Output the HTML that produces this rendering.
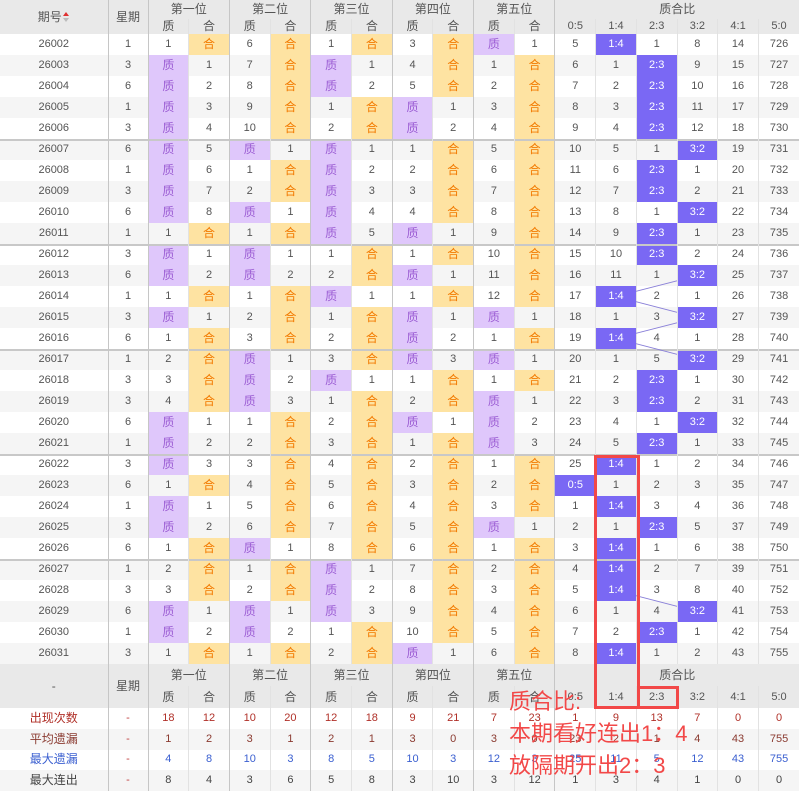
<!DOCTYPE html>
<html><head><meta charset="utf-8">
<style>
*{margin:0;padding:0;box-sizing:border-box}
body{width:799px;height:791px;overflow:hidden;background:#fff;position:relative;font-family:"Liberation Sans","Noto Sans CJK SC",sans-serif}
table{border-collapse:collapse;table-layout:fixed;width:799px;font-size:11px;color:#555;text-align:center}
td{height:21px;padding:0;border-left:1px solid #e2e2e2;white-space:nowrap;overflow:hidden;line-height:13px}
td.b{border-left:1px solid #c6c6c6}
.hd td{background:#e9e9e9;color:#555;font-size:12px}
tr.h1 td{height:19px}
tr.h2 td{height:15px;font-size:12px}
tr.h2 td.n{font-size:11px}
tbody.d tr:nth-child(even) td{background:#f5f5f5}
tbody.d tr.g td{box-shadow:inset 0 2px #c8c8c8}
td.z{background:#dfc7fb !important;color:#9c5ed4;font-size:12px}
td.h{background:#fee3a2 !important;color:#f27a00;font-size:12px}
td.r{background:#7a68f4 !important;color:#fff}
tr.f1 td{height:22px}
tr.f2 td{height:22px}
tbody.s td{height:20.75px}
tbody.s tr:nth-child(even) td{background:#f5f5f5}
.c1 td{color:#b03028}.c2 td{color:#8a3a30}.c3 td{color:#3a5fd0}.c4 td{color:#444}
.c1 td:nth-child(2),.c2 td:nth-child(2),.c3 td:nth-child(2),.c4 td:nth-child(2){color:#c04040}
.arr{display:inline-block;width:7px;height:10px;vertical-align:middle;position:relative;margin-left:1px}
.arr:before{content:"";position:absolute;left:0;top:0;border:3.5px solid transparent;border-bottom:4px solid #e03030;border-top:0}
.arr:after{content:"";position:absolute;left:0;top:6px;border:3.5px solid transparent;border-top:4px solid #bbb;border-bottom:0}
.rb{position:absolute;border:3px solid #f24848}
.note{position:absolute;left:509px;top:686px;color:#f24848;font-size:22px;line-height:32px;font-family:"Liberation Sans","Noto Sans CJK SC",sans-serif;white-space:nowrap}
</style></head><body>
<table>
<colgroup><col style="width:108px"><col style="width:40px"><col span="16" style="width:40.6875px"></colgroup>
<tbody class="hd">
<tr class="h1"><td rowspan="2" style="border-left:0">期号<span class="arr"></span></td><td rowspan="2" class="b">星期</td><td colspan="2" class="b">第一位</td><td colspan="2" class="b">第二位</td><td colspan="2" class="b">第三位</td><td colspan="2" class="b">第四位</td><td colspan="2" class="b">第五位</td><td colspan="6" class="b">质合比</td></tr>
<tr class="h2"><td class="b">质</td><td>合</td><td class="b">质</td><td>合</td><td class="b">质</td><td>合</td><td class="b">质</td><td>合</td><td class="b">质</td><td>合</td><td class="b n">0:5</td><td class="n">1:4</td><td class="n">2:3</td><td class="n">3:2</td><td class="n">4:1</td><td class="n">5:0</td></tr>
</tbody>
<tbody class="d">
<tr><td style="border-left:0">26002</td><td class="b">1</td><td class="b">1</td><td class="h">合</td><td class="b">6</td><td class="h">合</td><td class="b">1</td><td class="h">合</td><td class="b">3</td><td class="h">合</td><td class="b z">质</td><td>1</td><td class="b">5</td><td class="r">1:4</td><td>1</td><td>8</td><td>14</td><td>726</td></tr>
<tr><td style="border-left:0">26003</td><td class="b">3</td><td class="b z">质</td><td>1</td><td class="b">7</td><td class="h">合</td><td class="b z">质</td><td>1</td><td class="b">4</td><td class="h">合</td><td class="b">1</td><td class="h">合</td><td class="b">6</td><td>1</td><td class="r">2:3</td><td>9</td><td>15</td><td>727</td></tr>
<tr><td style="border-left:0">26004</td><td class="b">6</td><td class="b z">质</td><td>2</td><td class="b">8</td><td class="h">合</td><td class="b z">质</td><td>2</td><td class="b">5</td><td class="h">合</td><td class="b">2</td><td class="h">合</td><td class="b">7</td><td>2</td><td class="r">2:3</td><td>10</td><td>16</td><td>728</td></tr>
<tr><td style="border-left:0">26005</td><td class="b">1</td><td class="b z">质</td><td>3</td><td class="b">9</td><td class="h">合</td><td class="b">1</td><td class="h">合</td><td class="b z">质</td><td>1</td><td class="b">3</td><td class="h">合</td><td class="b">8</td><td>3</td><td class="r">2:3</td><td>11</td><td>17</td><td>729</td></tr>
<tr><td style="border-left:0">26006</td><td class="b">3</td><td class="b z">质</td><td>4</td><td class="b">10</td><td class="h">合</td><td class="b">2</td><td class="h">合</td><td class="b z">质</td><td>2</td><td class="b">4</td><td class="h">合</td><td class="b">9</td><td>4</td><td class="r">2:3</td><td>12</td><td>18</td><td>730</td></tr>
<tr class="g"><td style="border-left:0">26007</td><td class="b">6</td><td class="b z">质</td><td>5</td><td class="b z">质</td><td>1</td><td class="b z">质</td><td>1</td><td class="b">1</td><td class="h">合</td><td class="b">5</td><td class="h">合</td><td class="b">10</td><td>5</td><td>1</td><td class="r">3:2</td><td>19</td><td>731</td></tr>
<tr><td style="border-left:0">26008</td><td class="b">1</td><td class="b z">质</td><td>6</td><td class="b">1</td><td class="h">合</td><td class="b z">质</td><td>2</td><td class="b">2</td><td class="h">合</td><td class="b">6</td><td class="h">合</td><td class="b">11</td><td>6</td><td class="r">2:3</td><td>1</td><td>20</td><td>732</td></tr>
<tr><td style="border-left:0">26009</td><td class="b">3</td><td class="b z">质</td><td>7</td><td class="b">2</td><td class="h">合</td><td class="b z">质</td><td>3</td><td class="b">3</td><td class="h">合</td><td class="b">7</td><td class="h">合</td><td class="b">12</td><td>7</td><td class="r">2:3</td><td>2</td><td>21</td><td>733</td></tr>
<tr><td style="border-left:0">26010</td><td class="b">6</td><td class="b z">质</td><td>8</td><td class="b z">质</td><td>1</td><td class="b z">质</td><td>4</td><td class="b">4</td><td class="h">合</td><td class="b">8</td><td class="h">合</td><td class="b">13</td><td>8</td><td>1</td><td class="r">3:2</td><td>22</td><td>734</td></tr>
<tr><td style="border-left:0">26011</td><td class="b">1</td><td class="b">1</td><td class="h">合</td><td class="b">1</td><td class="h">合</td><td class="b z">质</td><td>5</td><td class="b z">质</td><td>1</td><td class="b">9</td><td class="h">合</td><td class="b">14</td><td>9</td><td class="r">2:3</td><td>1</td><td>23</td><td>735</td></tr>
<tr class="g"><td style="border-left:0">26012</td><td class="b">3</td><td class="b z">质</td><td>1</td><td class="b z">质</td><td>1</td><td class="b">1</td><td class="h">合</td><td class="b">1</td><td class="h">合</td><td class="b">10</td><td class="h">合</td><td class="b">15</td><td>10</td><td class="r">2:3</td><td>2</td><td>24</td><td>736</td></tr>
<tr><td style="border-left:0">26013</td><td class="b">6</td><td class="b z">质</td><td>2</td><td class="b z">质</td><td>2</td><td class="b">2</td><td class="h">合</td><td class="b z">质</td><td>1</td><td class="b">11</td><td class="h">合</td><td class="b">16</td><td>11</td><td>1</td><td class="r">3:2</td><td>25</td><td>737</td></tr>
<tr><td style="border-left:0">26014</td><td class="b">1</td><td class="b">1</td><td class="h">合</td><td class="b">1</td><td class="h">合</td><td class="b z">质</td><td>1</td><td class="b">1</td><td class="h">合</td><td class="b">12</td><td class="h">合</td><td class="b">17</td><td class="r">1:4</td><td>2</td><td>1</td><td>26</td><td>738</td></tr>
<tr><td style="border-left:0">26015</td><td class="b">3</td><td class="b z">质</td><td>1</td><td class="b">2</td><td class="h">合</td><td class="b">1</td><td class="h">合</td><td class="b z">质</td><td>1</td><td class="b z">质</td><td>1</td><td class="b">18</td><td>1</td><td>3</td><td class="r">3:2</td><td>27</td><td>739</td></tr>
<tr><td style="border-left:0">26016</td><td class="b">6</td><td class="b">1</td><td class="h">合</td><td class="b">3</td><td class="h">合</td><td class="b">2</td><td class="h">合</td><td class="b z">质</td><td>2</td><td class="b">1</td><td class="h">合</td><td class="b">19</td><td class="r">1:4</td><td>4</td><td>1</td><td>28</td><td>740</td></tr>
<tr class="g"><td style="border-left:0">26017</td><td class="b">1</td><td class="b">2</td><td class="h">合</td><td class="b z">质</td><td>1</td><td class="b">3</td><td class="h">合</td><td class="b z">质</td><td>3</td><td class="b z">质</td><td>1</td><td class="b">20</td><td>1</td><td>5</td><td class="r">3:2</td><td>29</td><td>741</td></tr>
<tr><td style="border-left:0">26018</td><td class="b">3</td><td class="b">3</td><td class="h">合</td><td class="b z">质</td><td>2</td><td class="b z">质</td><td>1</td><td class="b">1</td><td class="h">合</td><td class="b">1</td><td class="h">合</td><td class="b">21</td><td>2</td><td class="r">2:3</td><td>1</td><td>30</td><td>742</td></tr>
<tr><td style="border-left:0">26019</td><td class="b">3</td><td class="b">4</td><td class="h">合</td><td class="b z">质</td><td>3</td><td class="b">1</td><td class="h">合</td><td class="b">2</td><td class="h">合</td><td class="b z">质</td><td>1</td><td class="b">22</td><td>3</td><td class="r">2:3</td><td>2</td><td>31</td><td>743</td></tr>
<tr><td style="border-left:0">26020</td><td class="b">6</td><td class="b z">质</td><td>1</td><td class="b">1</td><td class="h">合</td><td class="b">2</td><td class="h">合</td><td class="b z">质</td><td>1</td><td class="b z">质</td><td>2</td><td class="b">23</td><td>4</td><td>1</td><td class="r">3:2</td><td>32</td><td>744</td></tr>
<tr><td style="border-left:0">26021</td><td class="b">1</td><td class="b z">质</td><td>2</td><td class="b">2</td><td class="h">合</td><td class="b">3</td><td class="h">合</td><td class="b">1</td><td class="h">合</td><td class="b z">质</td><td>3</td><td class="b">24</td><td>5</td><td class="r">2:3</td><td>1</td><td>33</td><td>745</td></tr>
<tr class="g"><td style="border-left:0">26022</td><td class="b">3</td><td class="b z">质</td><td>3</td><td class="b">3</td><td class="h">合</td><td class="b">4</td><td class="h">合</td><td class="b">2</td><td class="h">合</td><td class="b">1</td><td class="h">合</td><td class="b">25</td><td class="r">1:4</td><td>1</td><td>2</td><td>34</td><td>746</td></tr>
<tr><td style="border-left:0">26023</td><td class="b">6</td><td class="b">1</td><td class="h">合</td><td class="b">4</td><td class="h">合</td><td class="b">5</td><td class="h">合</td><td class="b">3</td><td class="h">合</td><td class="b">2</td><td class="h">合</td><td class="b r">0:5</td><td>1</td><td>2</td><td>3</td><td>35</td><td>747</td></tr>
<tr><td style="border-left:0">26024</td><td class="b">1</td><td class="b z">质</td><td>1</td><td class="b">5</td><td class="h">合</td><td class="b">6</td><td class="h">合</td><td class="b">4</td><td class="h">合</td><td class="b">3</td><td class="h">合</td><td class="b">1</td><td class="r">1:4</td><td>3</td><td>4</td><td>36</td><td>748</td></tr>
<tr><td style="border-left:0">26025</td><td class="b">3</td><td class="b z">质</td><td>2</td><td class="b">6</td><td class="h">合</td><td class="b">7</td><td class="h">合</td><td class="b">5</td><td class="h">合</td><td class="b z">质</td><td>1</td><td class="b">2</td><td>1</td><td class="r">2:3</td><td>5</td><td>37</td><td>749</td></tr>
<tr><td style="border-left:0">26026</td><td class="b">6</td><td class="b">1</td><td class="h">合</td><td class="b z">质</td><td>1</td><td class="b">8</td><td class="h">合</td><td class="b">6</td><td class="h">合</td><td class="b">1</td><td class="h">合</td><td class="b">3</td><td class="r">1:4</td><td>1</td><td>6</td><td>38</td><td>750</td></tr>
<tr class="g"><td style="border-left:0">26027</td><td class="b">1</td><td class="b">2</td><td class="h">合</td><td class="b">1</td><td class="h">合</td><td class="b z">质</td><td>1</td><td class="b">7</td><td class="h">合</td><td class="b">2</td><td class="h">合</td><td class="b">4</td><td class="r">1:4</td><td>2</td><td>7</td><td>39</td><td>751</td></tr>
<tr><td style="border-left:0">26028</td><td class="b">3</td><td class="b">3</td><td class="h">合</td><td class="b">2</td><td class="h">合</td><td class="b z">质</td><td>2</td><td class="b">8</td><td class="h">合</td><td class="b">3</td><td class="h">合</td><td class="b">5</td><td class="r">1:4</td><td>3</td><td>8</td><td>40</td><td>752</td></tr>
<tr><td style="border-left:0">26029</td><td class="b">6</td><td class="b z">质</td><td>1</td><td class="b z">质</td><td>1</td><td class="b z">质</td><td>3</td><td class="b">9</td><td class="h">合</td><td class="b">4</td><td class="h">合</td><td class="b">6</td><td>1</td><td>4</td><td class="r">3:2</td><td>41</td><td>753</td></tr>
<tr><td style="border-left:0">26030</td><td class="b">1</td><td class="b z">质</td><td>2</td><td class="b z">质</td><td>2</td><td class="b">1</td><td class="h">合</td><td class="b">10</td><td class="h">合</td><td class="b">5</td><td class="h">合</td><td class="b">7</td><td>2</td><td class="r">2:3</td><td>1</td><td>42</td><td>754</td></tr>
<tr><td style="border-left:0">26031</td><td class="b">3</td><td class="b">1</td><td class="h">合</td><td class="b">1</td><td class="h">合</td><td class="b">2</td><td class="h">合</td><td class="b z">质</td><td>1</td><td class="b">6</td><td class="h">合</td><td class="b">8</td><td class="r">1:4</td><td>1</td><td>2</td><td>43</td><td>755</td></tr>
</tbody>
<tbody class="hd">
<tr class="f1"><td rowspan="2" style="border-left:0">-</td><td rowspan="2" class="b">星期</td><td colspan="2" class="b">第一位</td><td colspan="2" class="b">第二位</td><td colspan="2" class="b">第三位</td><td colspan="2" class="b">第四位</td><td colspan="2" class="b">第五位</td><td colspan="6" class="b">质合比</td></tr>
<tr class="f2"><td class="b">质</td><td>合</td><td class="b">质</td><td>合</td><td class="b">质</td><td>合</td><td class="b">质</td><td>合</td><td class="b">质</td><td>合</td><td class="b" style="font-size:11px">0:5</td><td style="font-size:11px">1:4</td><td style="font-size:11px">2:3</td><td style="font-size:11px">3:2</td><td style="font-size:11px">4:1</td><td style="font-size:11px">5:0</td></tr>
</tbody>
<tbody class="s">
<tr class="c1"><td style="border-left:0;font-size:12px">出现次数</td><td class="b">-</td><td class="b">18</td><td>12</td><td class="b">10</td><td>20</td><td class="b">12</td><td>18</td><td class="b">9</td><td>21</td><td class="b">7</td><td>23</td><td class="b">1</td><td>9</td><td>13</td><td>7</td><td>0</td><td>0</td></tr>
<tr class="c2"><td style="border-left:0;font-size:12px">平均遗漏</td><td class="b">-</td><td class="b">1</td><td>2</td><td class="b">3</td><td>1</td><td class="b">2</td><td>1</td><td class="b">3</td><td>0</td><td class="b">3</td><td>0</td><td class="b">23</td><td>2</td><td>1</td><td>4</td><td>43</td><td>755</td></tr>
<tr class="c3"><td style="border-left:0;font-size:12px">最大遗漏</td><td class="b">-</td><td class="b">4</td><td>8</td><td class="b">10</td><td>3</td><td class="b">8</td><td>5</td><td class="b">10</td><td>3</td><td class="b">12</td><td>3</td><td class="b">25</td><td>11</td><td>5</td><td>12</td><td>43</td><td>755</td></tr>
<tr class="c4"><td style="border-left:0;font-size:12px">最大连出</td><td class="b">-</td><td class="b">8</td><td>4</td><td class="b">3</td><td>6</td><td class="b">5</td><td>8</td><td class="b">3</td><td>10</td><td class="b">3</td><td>12</td><td class="b">1</td><td>3</td><td>4</td><td>1</td><td>0</td><td>0</td></tr>
</tbody>
</table>
<svg width="799" height="791" style="position:absolute;left:0;top:0" stroke="#8a80d8" stroke-width="1">
<line x1="677" y1="280.8" x2="636" y2="291.3"/>
<line x1="636" y1="301.7" x2="677" y2="312.3"/>
<line x1="677" y1="322.8" x2="636" y2="333.3"/>
<line x1="636" y1="343.7" x2="677" y2="354.3"/>
<line x1="636" y1="595.7" x2="677" y2="606.3"/>
</svg>
<div class="rb" style="left:594px;top:455px;width:46px;height:254px"></div>
<div class="rb" style="left:637px;top:686px;width:42px;height:23px"></div>
<div class="note">质合比:<br>本期看好连出1：4<br>放隔期开出2：3</div>
</body></html>
